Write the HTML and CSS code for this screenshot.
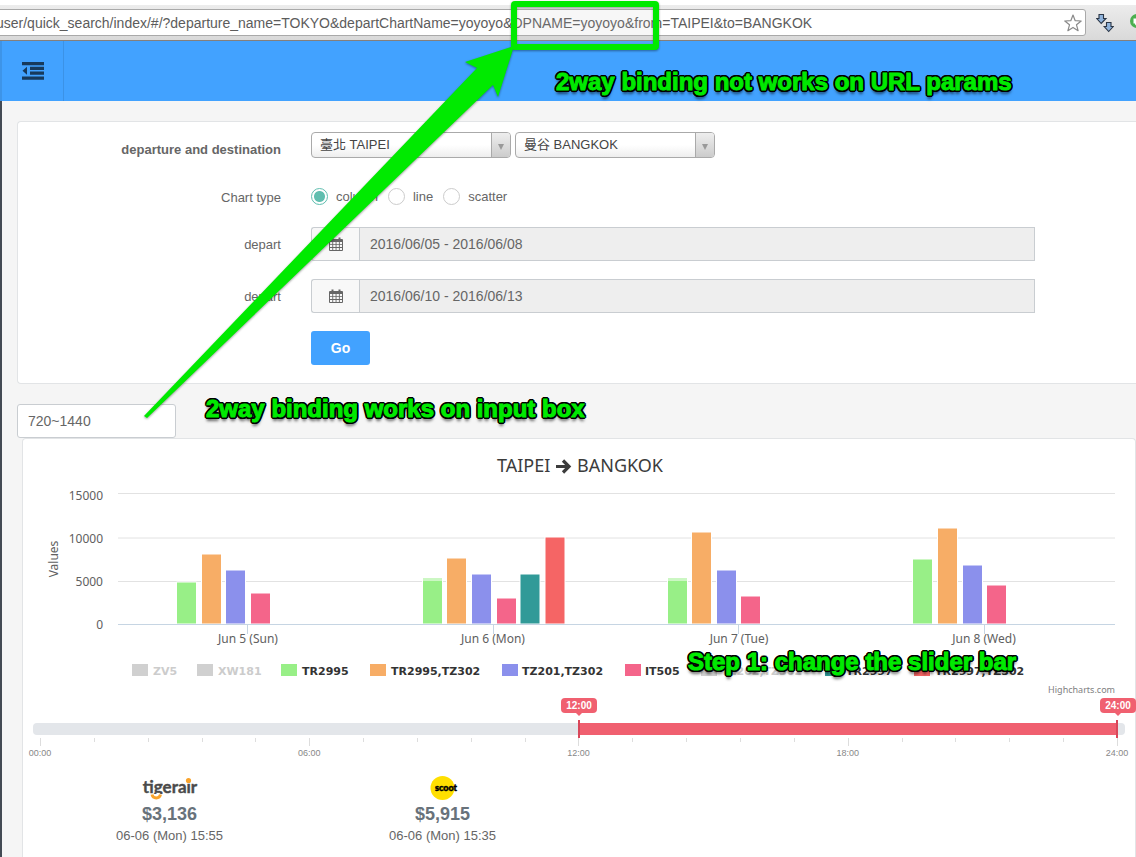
FILE: index.html
```html
<!DOCTYPE html>
<html lang="en">
<head>
<meta charset="utf-8">
<title>Quick search</title>
<link rel="stylesheet" href="styles.css">
</head>
<body>
<div class="browser-bar">
  <div class="omnibox">
    <input class="omnibox-url" type="text" aria-label="Address" value="user/quick_search/index/#/?departure_name=TOKYO&amp;departChartName=yoyoyo&amp;DPNAME=yoyoyo&amp;from=TAIPEI&amp;to=BANGKOK">
    <button class="icon-button" type="button" aria-label="Bookmark">
      <svg width="18" height="18" viewBox="0 0 18 18"><path d="M9 1l2.200 5.700 6 .3-4.700 3.800 1.600 5.900L9 13.400l-5.100 3.300 1.600-5.900L.8 7l6-.3z" fill="#fff" stroke="#8a8a8a" stroke-width="1.200" stroke-linejoin="round"/></svg>
    </button>
  </div>
  <button class="icon-button" type="button" aria-label="Downloads">
    <svg width="18" height="20" viewBox="0 0 18 20"><g fill="#8fb3dc" stroke="#2b3646" stroke-width="1.100"><path d="M3 1.500h4.500v4H10L5.200 10.500.8 5.500H3z"/><path d="M10.500 9.500H15v4h2.300l-4.600 5-4.500-5h2.300z"/></g></svg>
  </button>
  <button class="icon-button extension" type="button" aria-label="Extension">
    <svg width="14" height="14" viewBox="0 0 14 14"><circle cx="7" cy="7" r="7" fill="#4caf50"/><path d="M3.500 4.500h5v5h-2l-1.500 2v-2H3.500z" fill="#fff"/></svg>
  </button>
</div>

<header class="topbar">
  <button class="menu-toggle" type="button" aria-label="Toggle menu">
    <svg width="22" height="18" viewBox="0 0 22 18" fill="#173a5c"><path d="M0 0h22v3.200H0zM8 4.800h14V8H8zM8 9.500h14v3.200H8zM0 14.500h22v3.300H0zM5 4.800v8L.5 8.800z"/></svg>
  </button>
</header>

<main class="page">
  <form class="panel search">
    <div class="row">
      <label class="row-label strong" for="from">departure and destination</label>
      <div class="row-control selects">
        <span class="picker"><select id="from"><option>臺北 TAIPEI</option></select></span>
        <span class="picker"><select aria-label="destination"><option>曼谷 BANGKOK</option></select></span>
      </div>
    </div>
    <div class="row short">
      <span class="row-label" id="chart-type">Chart type</span>
      <div class="row-control radios" role="radiogroup" aria-labelledby="chart-type">
        <label class="radio"><input type="radio" name="type" checked><span>column</span></label>
        <label class="radio"><input type="radio" name="type"><span>line</span></label>
        <label class="radio"><input type="radio" name="type"><span>scatter</span></label>
      </div>
    </div>
    <div class="row">
      <label class="row-label" for="depart-1">depart</label>
      <div class="row-control date">
        <span class="addon"><svg class="calendar" viewBox="0 0 14 14"><use href="#cal"/></svg></span>
        <input id="depart-1" type="text" readonly value="2016/06/05 - 2016/06/08">
      </div>
    </div>
    <div class="row">
      <label class="row-label" for="depart-2">depart</label>
      <div class="row-control date">
        <span class="addon"><svg class="calendar" viewBox="0 0 14 14"><defs><path id="cal" fill="#666" fill-rule="evenodd" d="M1 2h1.500V.5h2V2h5V.5h2V2H13a1 1 0 0 1 1 1v10a1 1 0 0 1-1 1H1a1 1 0 0 1-1-1V3a1 1 0 0 1 1-1zM1 5v2h2.300V5zM4.200 5v2h2.400V5zM7.500 5v2h2.400V5zM10.800 5v2H13V5zM1 7.800v2.300h2.300V7.800zM4.200 7.800v2.300h2.400V7.800zM7.500 7.800v2.300h2.400V7.800zM10.800 7.800v2.300H13V7.800zM1 11v2h2.300v-2zM4.200 11v2h2.400v-2zM7.500 11v2h2.400v-2zM10.800 11v2H13v-2z"/></defs><use href="#cal"/></svg></span>
        <input id="depart-2" type="text" readonly value="2016/06/10 - 2016/06/13">
      </div>
    </div>
    <div class="row">
      <span class="row-label"></span>
      <div class="row-control"><button class="go" type="button">Go</button></div>
    </div>
  </form>

  <input class="range-box" type="text" aria-label="Time range in minutes" value="720~1440">

  <section class="panel results">
    <svg class="chart" viewBox="23 439 1112 262" role="img" aria-label="Fares by day">
      <g class="chart-title"><text x="497" y="472">TAIPEI</text><text x="577" y="472">BANGKOK</text></g>
      <path d="M556 466.500h12M563 460.500l6 6-6 6" fill="none" stroke="#3c3c3c" stroke-width="3.200"/>
      <path d="M118 493.500h997M118 538h997M118 581.500h997" stroke="#e2e2e2"/>
      <g class="axis" text-anchor="end"><text x="103" y="500">15000</text><text x="103" y="543">10000</text><text x="103" y="586">5000</text><text x="103" y="629">0</text></g>
      <text class="axis" text-anchor="middle" transform="translate(58 559) rotate(-90)">Values</text>
      <g stroke="#fff" stroke-width="1">
        <g fill="#98ef87"><path d="M176.500 582h20v42h-20zM422.500 578h20v46h-20zM667.500 578h20v46h-20zM912.500 559h20v65h-20z"/></g>
        <g fill="#f7ad66"><path d="M201.500 554h20v70h-20zM446.500 558h20v66h-20zM691.500 532h20v92h-20zM937.500 528h20v96h-20z"/></g>
        <g fill="#8b90ec"><path d="M225.500 570h20v54h-20zM471.500 574h20v50h-20zM716.500 570h20v54h-20zM962.500 565h20v59h-20z"/></g>
        <g fill="#f4658a"><path d="M250.500 593h20v31h-20zM496.500 598h20v26h-20zM740.500 596h20v28h-20zM986.500 585h20v39h-20z"/></g>
        <path fill="#319a98" d="M520 574h20v50h-20z"/>
        <path fill="#f56565" d="M545 537h20v87h-20z"/>
      </g>
      <path d="M422.500 580h20M667.500 580h20" stroke="#fff"/>
      <path d="M118 624.500h997M247.500 625v9M493.500 625v9M738.500 625v9M984.500 625v9" stroke="#c6d5e3" fill="none"/>
      <g class="axis" text-anchor="middle"><text x="248" y="643">Jun 5 (Sun)</text><text x="493" y="643">Jun 6 (Mon)</text><text x="739" y="643">Jun 7 (Tue)</text><text x="984" y="643">Jun 8 (Wed)</text></g>
      <g fill="#d0d0d0"><path d="M132 664h16v12h-16zM197 664h16v12h-16zM701 664h16v12h-16z"/></g>
      <path fill="#98ef87" d="M281 664h16v12h-16z"/><path fill="#f7ad66" d="M370 664h16v12h-16z"/><path fill="#8b90ec" d="M502 664h16v12h-16z"/><path fill="#f4658a" d="M625 664h16v12h-16z"/><path fill="#319a98" d="M825 664h16v12h-16z"/><path fill="#f56565" d="M914 664h16v12h-16z"/>
      <g class="legend off"><text x="153" y="675">ZV5</text><text x="218" y="675">XW181</text><text x="721" y="675">TZ202,TZ302</text></g>
      <g class="legend"><text x="302" y="675">TR2995</text><text x="391" y="675">TR2995,TZ302</text><text x="522" y="675">TZ201,TZ302</text><text x="645" y="675">IT505</text><text x="846" y="675">TR2997</text><text x="935" y="675">TR2997,TZ302</text></g>
      <text class="credit" text-anchor="end" x="1115" y="693">Highcharts.com</text>
    </svg>

    <div class="slider">
      <div class="rail">
        <div class="scale">
          <div class="fill"></div>
          <input type="range" min="0" max="1440" value="720" aria-label="From time">
          <input type="range" min="0" max="1440" value="1440" aria-label="To time">
          <output class="bubble half">12:00</output>
          <output class="bubble full">24:00</output>
        </div>
      </div>
      <div class="ticks"><i></i><i></i><i></i><i></i><i></i><i></i><i></i><i></i><i></i><i></i><i></i><i></i><i></i><i></i><i></i><i></i><i></i><i></i><i></i><i></i><i></i></div>
      <div class="hours"><span>00:00</span><span>06:00</span><span>12:00</span><span>18:00</span><span>24:00</span></div>
    </div>

    <div class="fares">
      <article class="fare">
        <svg class="logo" width="60" height="26" viewBox="0 0 60 26" role="img" aria-label="tigerair">
          <text class="tiger" x="30" y="18" text-anchor="middle">tigerair</text>
          <path d="M10 19h13v7H10z" fill="#fff"/>
          <path d="M12 19.500c1 4.500 7.500 4.500 8.500 0" fill="none" stroke="#f9a32b" stroke-width="3"/>
          <circle cx="48.500" cy="5.500" r="2.600" fill="#f9a32b"/>
        </svg>
        <strong>$3,136</strong>
        <span>06-06 (Mon) 15:55</span>
      </article>
      <article class="fare">
        <svg class="logo" width="60" height="26" viewBox="0 0 60 26" role="img" aria-label="scoot">
          <circle cx="29.500" cy="13" r="12" fill="#ffdf00"/>
          <text class="scoot" x="33" y="16" text-anchor="middle">scoot</text>
        </svg>
        <strong>$5,915</strong>
        <span>06-06 (Mon) 15:35</span>
      </article>
    </div>
  </section>
</main>

<svg class="arrow" width="670" height="430" viewBox="0 0 670 430" aria-hidden="true">
  <g fill="#00ea00"><path d="M514 46l-16 51-5-12L147 418l-3-2L477 68l-12-6z"/></g>
  <rect x="514" y="4" width="142" height="43" rx="1" fill="#fff" fill-opacity=".1" stroke="#00ea00" stroke-width="6"/>
</svg>
<p class="note note-url">2way binding not works on URL params</p>
<p class="note note-input">2way binding works on input box</p>
<p class="note note-step">Step 1: change the slider bar</p>
</body>
</html>
```
FILE: styles.css
```css
* { box-sizing: border-box; }

body {
  margin: 0;
  position: relative;
  min-height: 100vh;
  overflow-x: hidden;
  background: #f5f5f5;
  color: #666;
  font: 13px/18px "Liberation Sans", "Noto Sans CJK TC", sans-serif;
}

input, select, button { font: inherit; color: inherit; }

.browser-bar {
  display: flex;
  align-items: center;
  gap: 10px;
  height: 41px;
  padding-top: 5px;
  overflow: hidden;
  background: linear-gradient(#fff 5px, #ececec 5px, #d9d9d9);
  border-bottom: 1px solid #857f7b;
}
.omnibox {
  flex: 1;
  display: flex;
  align-items: center;
  height: 27px;
  margin-left: -5px;
  padding-right: 3px;
  background: #fff;
  border: 1px solid #a9a9a9;
  border-radius: 3px;
}
.omnibox-url {
  flex: 1;
  min-width: 0;
  padding: 0;
  border: 0;
  background: none;
  color: #5c5c5c;
  font-size: 14px;
  line-height: 20px;
}
.icon-button {
  display: flex;
  flex: none;
  padding: 0;
  border: 0;
  background: none;
}
.extension { margin: 0 -8px 4px 6px; }

.topbar {
  display: flex;
  height: 60px;
  background: #42a2ff;
  border-left: 2px solid #3d94e8;
}
.menu-toggle {
  width: 62px;
  padding: 0;
  border: 0;
  border-right: 1px solid #3b92e6;
  background: none;
}
.menu-toggle svg { display: block; margin: 0 auto; }

.page {
  display: flex;
  flex-direction: column;
  min-height: calc(100vh - 101px);
  padding: 20px 0 0 15px;
  border-left: 2px solid #434a54;
}

.panel { background: #fff; border: 1px solid #e2e4e6; border-radius: 4px; }

.search {
  display: grid;
  gap: 18px;
  padding: 10px 101px 18px 0;
  border-right: 0;
  border-radius: 4px 0 0 4px;
}
.row {
  display: grid;
  grid-template-columns: 263px 1fr;
  gap: 30px;
  align-items: center;
  min-height: 34px;
}
.row.short { min-height: 25px; }
.row-label { padding-top: 2px; text-align: right; }
.strong { font-weight: bold; }

.selects { display: flex; gap: 4px; align-self: start; }
.picker {
  position: relative;
  width: 200px;
  height: 26px;
  border: 1px solid #aaa;
  border-radius: 4px;
  background: linear-gradient(#fff 50%, #eee);
  overflow: hidden;
}
.picker select {
  width: 100%;
  height: 24px;
  padding: 0 8px;
  border: 0;
  appearance: none;
  background: none;
  color: #444;
}
.picker::before {
  content: "";
  position: absolute;
  inset: 0 0 0 auto;
  width: 18px;
  border-left: 1px solid #aaa;
  background: linear-gradient(#eee, #ccc);
}
.picker::after {
  content: "";
  position: absolute;
  top: 11px;
  right: 6px;
  border: 3px solid transparent;
  border-top: 6px solid #999;
  border-bottom: 0;
}

.radios { display: flex; gap: 10px; }
.radio { display: flex; gap: 8px; align-items: center; }
.radio input {
  width: 17px;
  height: 17px;
  margin: 0;
  appearance: none;
  border: 1px solid #ccc;
  border-radius: 50%;
  background: #fff;
}
.radio input:checked { border-color: #5fbeaf; background: radial-gradient(#5fbeaf 5px, #fff 6px); }

.date { display: flex; height: 34px; }
.addon {
  display: flex;
  align-items: center;
  justify-content: center;
  width: 48px;
  border: 1px solid #c9cdd1;
  border-right: 0;
  border-radius: 3px 0 0 3px;
  background: #f8f8f8;
}
.calendar { width: 14px; height: 14px; }
.date input {
  flex: 1;
  min-width: 0;
  padding: 0 10px;
  border: 1px solid #c9cdd1;
  background: #eee;
  font-size: 14px;
}

.go {
  display: block;
  width: 59px;
  height: 34px;
  border: 0;
  border-radius: 3px;
  background: #42a2ff;
  color: #fff;
  font-size: 14px;
  font-weight: bold;
}

.range-box {
  display: block;
  width: 159px;
  height: 34px;
  margin: 20px 0 0;
  padding: 0 10px;
  border: 1px solid #c9cdd1;
  border-radius: 3px;
  background: #fff;
  font-size: 14px;
}

.results {
  flex: 1;
  margin-left: 5px;
  border-bottom: 0;
  border-radius: 4px 4px 0 0;
}
.chart {
  display: block;
  width: 100%;
  font-family: "Noto Sans", sans-serif;
}
.chart-title { font-size: 18px; fill: #3c3c3c; }
.axis { font-size: 12px; fill: #606060; }
.legend { font: bold 11px "DejaVu Sans", sans-serif; fill: #333; }
.legend.off { fill: #ccc; }
.credit { font-size: 9px; fill: #808080; }

.slider { padding: 22px 10px 0; }
.rail {
  height: 12px;
  padding: 0 7px;
  border-radius: 4px;
  background: #e3e6ea;
}
.scale { position: relative; height: 12px; }
.fill { height: 12px; margin-left: 50%; background: #f06070; }
.scale input {
  position: absolute;
  top: -3px;
  left: 0;
  width: 100%;
  height: 18px;
  margin: 0;
  appearance: none;
  background: none;
  pointer-events: none;
}
.scale input::-webkit-slider-thumb {
  appearance: none;
  width: 2px;
  height: 18px;
  background: #d9475a;
  pointer-events: auto;
}
.bubble {
  position: absolute;
  top: -25px;
  width: 36px;
  margin-left: -18px;
  border-radius: 4px;
  background: #f06070;
  color: #fff;
  font-size: 10px;
  font-weight: bold;
  line-height: 15px;
  text-align: center;
}
.bubble::after {
  content: "";
  position: absolute;
  top: 15px;
  left: 15px;
  border: 3px solid transparent;
  border-top-color: #f06070;
}
.half { left: 50%; }
.full { left: 100%; }
.ticks { display: flex; justify-content: space-between; margin: 3px 7px 0; height: 8px; }
.ticks i { width: 1px; height: 4px; background: #ddd; }
.ticks i:nth-child(5n + 1) { height: 8px; }
.hours {
  display: flex;
  justify-content: space-between;
  margin: 0 8px 0 7px;
  color: #888;
  font-size: 9px;
  line-height: 14px;
}
.hours span { display: flex; justify-content: center; width: 0; }

.fares {
  display: grid;
  grid-template-columns: repeat(4, 1fr);
  padding: 15px 10px 8px;
}
.fare { display: flex; flex-direction: column; align-items: center; }
.fare strong { color: #68727b; font-size: 18px; line-height: 26px; }
.fare span { color: #666; }
.tiger { font: bold 17px Lato, sans-serif; fill: #4a4a4a; stroke: #4a4a4a; stroke-width: .4px; }
.scoot { font: 900 9px Lato, sans-serif; fill: #000; stroke: #000; stroke-width: .5px; }

.arrow {
  position: absolute;
  top: 0;
  left: 0;
  pointer-events: none;
  filter: drop-shadow(0 1px 1px rgba(0, 0, 0, .4));
}
.note {
  position: absolute;
  margin: 0;
  color: #00ea00;
  font-size: 24px;
  font-weight: bold;
  line-height: 28px;
  white-space: nowrap;
  -webkit-text-stroke: 1px #00ea00;
  text-shadow: 2px 0 #000, -2px 0 #000, 0 2px #000, 0 -2px #000, 2px 1px #000, -2px 1px #000, 2px -1px #000, -2px -1px #000, 1px 2px #000, -1px 2px #000, 1px -2px #000, -1px -2px #000, 0 4px 3px rgba(0, 0, 0, .6);
}
.note-url { left: 556px; top: 68px; }
.note-input { left: 206px; top: 395px; }
.note-step { left: 688px; top: 648px; }
```
